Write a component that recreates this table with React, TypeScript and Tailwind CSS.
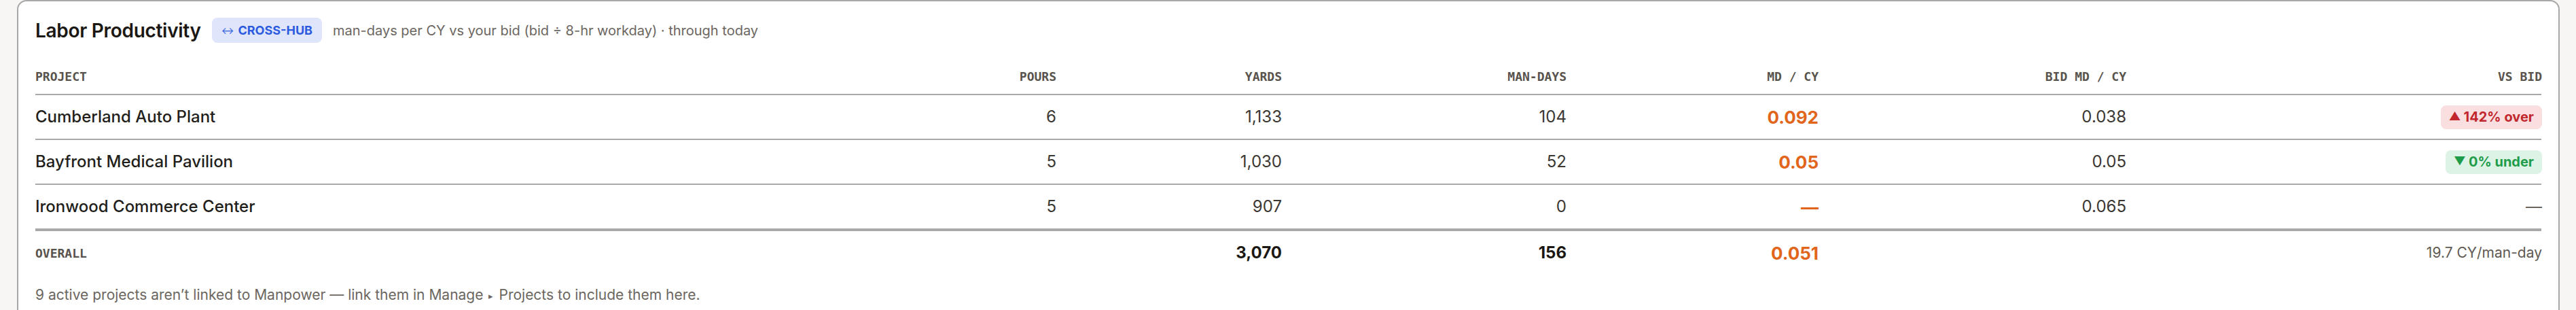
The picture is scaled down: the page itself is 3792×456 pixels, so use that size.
import React from 'react'

type Row = {
  name: string
  pours: string
  yards: string
  days: string
  md: string
  bid: string
  vs: 'over' | 'under' | null
  vsText?: string
}

const rows: Row[] = [
  { name: 'Cumberland Auto Plant', pours: '6', yards: '1,133', days: '104', md: '0.092', bid: '0.038', vs: 'over', vsText: '142% over' },
  { name: 'Bayfront Medical Pavilion', pours: '5', yards: '1,030', days: '52', md: '0.05', bid: '0.05', vs: 'under', vsText: '0% under' },
  { name: 'Ironwood Commerce Center', pours: '5', yards: '907', days: '0', md: '—', bid: '0.065', vs: null },
]

const grid = 'grid grid-cols-[1100px_403px_332px_419px_371px_453px_612px] items-center'
const head = "font-['DejaVu_Sans_Mono',monospace] text-[18px] font-bold text-[#58534c] uppercase"

function VsPill({ kind, text }: { kind: 'over' | 'under'; text: string }) {
  if (kind === 'over') {
    return (
      <span className="inline-flex items-center gap-1 h-[35px] px-[12px] rounded-[8px] bg-[#fadfe0] text-[#c1272d] text-[20px] font-bold">
        <span className="text-[17px]">▲</span>
        {text}
      </span>
    )
  }
  return (
    <span className="inline-flex items-center gap-1 h-[35px] px-[12px] rounded-[8px] bg-[#dcf3e5] text-[#1e9c4a] text-[20px] font-bold">
      <span className="text-[17px]">▼</span>
      {text}
    </span>
  )
}

export default function App() {
  return (
    <div className="min-h-[456px] w-full bg-[#f7f6f4] pl-[25px] pr-[24px] font-['Inter',sans-serif]">
      <div className="bg-white border-2 border-[#a9a8a6] rounded-[14px] px-[25px] pt-[24px] pb-[40px]">
        {/* Title row */}
        <div className="flex items-center gap-4 h-[37px]">
          <h2 className="text-[28px] font-semibold text-[#1b1814] tracking-[-0.3px]">Labor Productivity</h2>
          <span className="inline-flex items-center gap-[6px] h-[37px] px-[14px] rounded-[8px] bg-[#dfe6fb] text-[#2d5be0] text-[18px] font-bold">
            <span className="text-[14px] font-normal">↔</span>
            CROSS-HUB
          </span>
          <span className="text-[20px] text-[#6b665f]">man-days per CY vs your bid (bid ÷ 8-hr workday) · through today</span>
        </div>

        {/* Table */}
        <div className="mt-[23px]">
          <div className={`${grid} h-[54px] border-b-2 border-[#a9a9a9] ${head}`}>
            <div>Project</div>
            <div className="text-right">Pours</div>
            <div className="text-right">Yards</div>
            <div className="text-right">Man-days</div>
            <div className="text-right">MD / CY</div>
            <div className="text-right">Bid MD / CY</div>
            <div className="text-right">vs bid</div>
          </div>

          {rows.map((r, i) => (
            <div
              key={r.name}
              className={`${grid} ${i === rows.length - 1 ? 'h-[68px] border-b-4' : 'h-[66px] border-b-2'} border-[#a9a9a9] text-[24px] text-[#3b3732]`}
            >
              <div className="font-medium text-[#221e1a]">{r.name}</div>
              <div className="text-right">{r.pours}</div>
              <div className="text-right">{r.yards}</div>
              <div className="text-right">{r.days}</div>
              <div className="text-right text-[26px] font-bold text-[#e2651c]">{r.md}</div>
              <div className="text-right">{r.bid}</div>
              <div className="flex justify-end">
                {r.vs ? <VsPill kind={r.vs} text={r.vsText ?? ''} /> : <span className="text-[#6b665f]">—</span>}
              </div>
            </div>
          ))}

          <div className={`${grid} h-[64px]`}>
            <div className={head}>Overall</div>
            <div />
            <div className="text-right text-[24px] font-bold text-[#1b1814]">3,070</div>
            <div className="text-right text-[24px] font-bold text-[#1b1814]">156</div>
            <div className="text-right text-[26px] font-bold text-[#e2651c]">0.051</div>
            <div />
            <div className="text-right text-[21px] text-[#5f5a53]">19.7 CY/man-day</div>
          </div>
        </div>

        <p className="mt-[15px] text-[21px] leading-[30px] text-[#6b665f]">
          9 active projects aren’t linked to Manpower — link them in Manage
          <span className="mx-[8px] text-[13px] align-middle">▸</span>
          Projects to include them here.
        </p>
      </div>
    </div>
  )
}
